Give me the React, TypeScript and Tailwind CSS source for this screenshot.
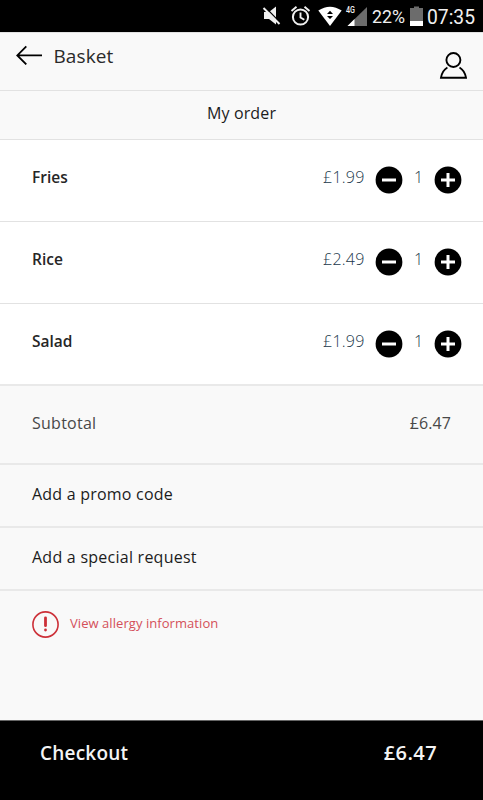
import React from "react";

const items = [
  { name: "Fries", price: "£1.99", qty: 1, border: "border-b border-[#e2e2e2]" },
  { name: "Rice", price: "£2.49", qty: 1, border: "border-b border-[#e2e2e2]" },
  { name: "Salad", price: "£1.99", qty: 1, border: "border-b-2 border-[#e9e9e9]" },
];

function StatusBar() {
  return (
    <div className="flex h-8 shrink-0 bg-black font-[Roboto,sans-serif] text-[#f0f0f0]">
      <svg width="230" height="32" viewBox="0 0 230 32" className="ml-auto" fill="none">
        <path d="M11 12h5l7-5.500v18l-7-5.500h-5z" fill="#f0f0f0" />
        <path d="M12 7l15 15.500" stroke="#000" strokeWidth="1.300" />
        <path d="M10.500 8l16 16" stroke="#f0f0f0" strokeWidth="1.900" />
        <circle cx="47.500" cy="17" r="7.600" stroke="#f0f0f0" strokeWidth="2" />
        <path d="M47.500 12.500v5l3.800 2.300M38.500 11l5-4.200M56.500 11l-5-4.200" stroke="#f0f0f0" strokeWidth="1.900" />
        <path d="M65.300 10.500Q77 2.800 88.700 10.500L77 26z" fill="#fff" />
        <path d="M74 13.900l3-3.200 3 3.200zM74 15.900l3 3.200 3-3.200z" fill="#000" />
        <path d="M114 7v19H94.500z" fill="#6c6c6c" />
        <path d="M101.500 19v7h-7z" fill="#fff" />
        <text x="93" y="13" fontSize="8.500" fontWeight="500" fill="#f0f0f0" textLength="9" lengthAdjust="spacingAndGlyphs">4G</text>
        <text x="119" y="23" fontSize="18" fill="#f0f0f0" textLength="33" lengthAdjust="spacingAndGlyphs">22%</text>
        <path d="M157 8h4V6.500h5V8h4v13h-13z" fill="#6c6c6c" />
        <path d="M157 21h13v5h-13z" fill="#fff" />
        <text x="174" y="23.500" fontSize="19.500" fill="#f0f0f0" textLength="48" lengthAdjust="spacingAndGlyphs">07:35</text>
      </svg>
    </div>
  );
}

function QtyButton({ plus = false }: { plus?: boolean }) {
  return (
    <button className="mt-[5px] block size-7" aria-label={plus ? "Increase" : "Decrease"}>
      <svg width="28" height="28" viewBox="0 0 28 28">
        <circle cx="14" cy="14" r="13.400" fill="#000" />
        <path d={plus ? "M7 14h14M14 7v14" : "M7 14h14"} stroke="#fff" strokeWidth="3" />
      </svg>
    </button>
  );
}

export default function App() {
  return (
    <div className="flex h-[800px] w-[483px] flex-col overflow-hidden bg-[#f9f9f9] font-['Open_Sans',sans-serif] text-[#1c1c1c]">
      <StatusBar />
      <header className="flex h-[59px] shrink-0 items-start border-y border-[#e2e2e2] pl-4 pr-4">
        <svg width="27" height="20" viewBox="0 0 27 20" className="mt-3" fill="none" stroke="#000" strokeWidth="1.800">
          <path d="M26 10.400H1.300M10.300 1.300L1.300 10.400l9 9" />
        </svg>
        <h1 className="ml-[10.500px] mt-[9px] text-[19px] leading-[28px] tracking-[0.08px] text-[#2a2a2a]">Basket</h1>
        <svg width="28" height="28" viewBox="0 0 28 28" className="ml-auto mt-[19px]" fill="none" stroke="#000" strokeWidth="1.900">
          <circle cx="14.400" cy="8" r="7" />
          <path d="M8.400 15.500Q3.200 18.500 2 25.700h25Q25.700 18.500 20.500 15.500" />
        </svg>
      </header>
      <div className="h-[49px] shrink-0 border-b border-[#e2e2e2] pt-[10px] text-center text-[16px] leading-6 tracking-[0.15px]">My order</div>
      {items.map((it) => (
        <div key={it.name} className={`flex h-[82px] shrink-0 items-start bg-white pl-8 pr-[21px] pt-[21px] ${it.border}`}>
          <span className="pt-1 text-[15.500px] font-semibold leading-6 text-[#262626]">{it.name}</span>
          <span className="ml-auto w-[42px] whitespace-nowrap pt-1 text-[16px] font-light leading-6 tracking-[0.25px] text-[#21374a]">{it.price}</span>
          <div className="ml-[10px] flex">
            <QtyButton />
            <span className="w-[31px] pt-1 text-center text-[16px] font-light leading-6 text-[#21374a]">{it.qty}</span>
            <QtyButton plus />
          </div>
        </div>
      ))}
      <div className="flex h-[79px] shrink-0 justify-between border-b-2 border-[#e9e9e9] pl-8 pr-8 pt-[25px] text-[16px] leading-6 text-[#484848]">
        <span className="tracking-[0.25px]">Subtotal</span>
        <span className="tracking-[0.1px]">£6.47</span>
      </div>
      <div className="h-[63px] shrink-0 border-b-2 border-[#e9e9e9] pl-8 pt-[17px] text-[16px] leading-6 tracking-[0.22px]">Add a promo code</div>
      <div className="h-[63px] shrink-0 border-b-2 border-[#e9e9e9] pl-8 pt-[17px] text-[16px] leading-6 tracking-[0.25px]">Add a special request</div>
      <div className="flex grow items-start pl-8 pt-5 text-[#d4505a]">
        <svg width="27" height="27" viewBox="0 0 27 27" fill="none" stroke="#cc3038">
          <circle cx="13.500" cy="13.500" r="12.600" strokeWidth="1.600" />
          <path d="M13.500 6.800v7.900M13.500 19v.1" strokeWidth="2.800" strokeLinecap="round" />
        </svg>
        <span className="ml-[11px] mt-[2px] text-[13px] leading-5 tracking-[0.06px]">View allergy information</span>
      </div>
      <footer className="flex h-20 shrink-0 justify-between border-t border-[#666] bg-black pl-10 pr-[46px] pt-[18px] text-[19px] font-semibold leading-7 text-[#f4f4f4]">
        <span className="tracking-[0.2px]">Checkout</span>
        <span className="text-[20px] tracking-[0.4px]">£6.47</span>
      </footer>
    </div>
  );
}
